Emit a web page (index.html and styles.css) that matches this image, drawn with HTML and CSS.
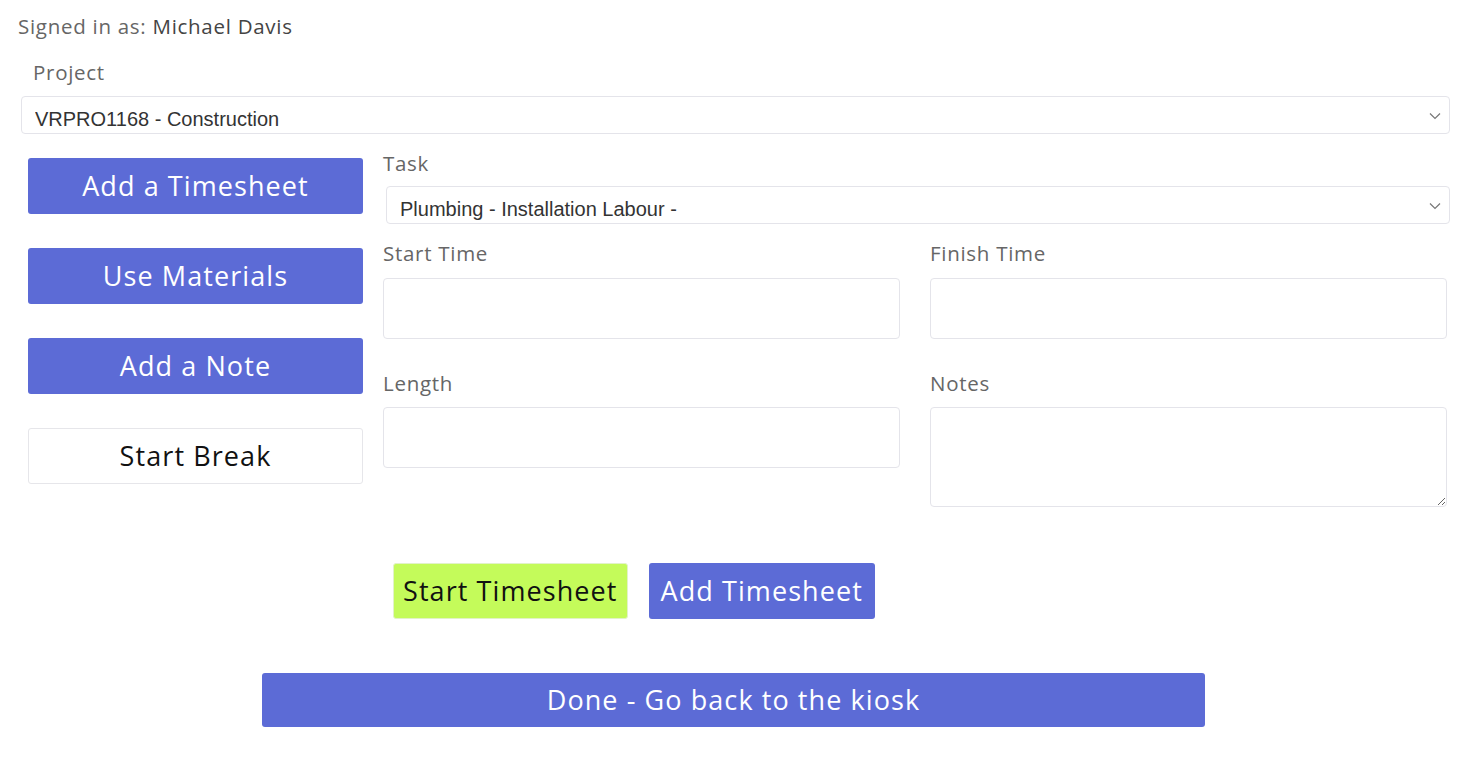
FILE: index.html
```html
<!DOCTYPE html>
<html>
<head>
<meta charset="utf-8">
<link rel="stylesheet" href="styles.css">
</head>
<body>
<div class="page">
  <p class="signed">Signed in as: <span class="name">Michael Davis</span></p>
  <div class="project">
    <label class="lbl project-lbl">Project</label>
    <div class="select-wrap">
      <select class="sel"><option>VRPRO1168 - Construction</option></select>
      <svg class="chev" width="12" height="8" viewBox="0 0 12 8"><path d="M1 1.5 L6 6.5 L11 1.5" fill="none" stroke="#777" stroke-width="1.2"/></svg>
    </div>
  </div>
  <div class="main">
    <div class="side">
      <button class="btn blue side-btn">Add a Timesheet</button>
      <button class="btn blue side-btn">Use Materials</button>
      <button class="btn blue side-btn">Add a Note</button>
      <button class="btn white side-btn">Start Break</button>
    </div>
    <div class="form">
      <label class="lbl">Task</label>
      <div class="select-wrap task-wrap">
        <select class="sel"><option>Plumbing - Installation Labour -</option></select>
        <svg class="chev" width="12" height="8" viewBox="0 0 12 8"><path d="M1 1.5 L6 6.5 L11 1.5" fill="none" stroke="#777" stroke-width="1.2"/></svg>
      </div>
      <div class="grid">
        <div class="field">
          <label class="lbl">Start Time</label>
          <input class="inp" type="text">
        </div>
        <div class="field">
          <label class="lbl">Finish Time</label>
          <input class="inp" type="text">
        </div>
        <div class="field second">
          <label class="lbl">Length</label>
          <input class="inp" type="text">
        </div>
        <div class="field second">
          <label class="lbl">Notes</label>
          <textarea class="inp ta"></textarea>
        </div>
      </div>
      <div class="actions">
        <button class="btn green act">Start Timesheet</button>
        <button class="btn blue act act-add">Add Timesheet</button>
      </div>
    </div>
  </div>
  <div class="done-row">
    <button class="btn blue done">Done - Go back to the kiosk</button>
  </div>
</div>
</body>
</html>
```
FILE: styles.css
```css
* { box-sizing: border-box; }
body {
  margin: 0;
  background: #fff;
  font-family: "Open Sans", "DejaVu Sans", sans-serif;
}
.page {
  padding: 14px 18px 0 18px;
}
.signed {
  margin: 0;
  font-size: 20.5px;
  line-height: 24px;
  color: #666;
  letter-spacing: 0.035em;
}
.signed .name { color: #444; }
.lbl {
  display: block;
  font-size: 20.5px;
  line-height: 26px;
  color: #666;
  letter-spacing: 0.035em;
}
.project {
  margin-top: 21px;
}
.project-lbl {
  padding-left: 15px;
}
.select-wrap {
  position: relative;
  margin-top: 11px;
}
.project .select-wrap { margin-left: 3px; }
.sel {
  display: block;
  width: 100%;
  height: 38px;
  -webkit-appearance: none;
  appearance: none;
  border: 1px solid #e4e4ea;
  border-radius: 4px;
  background: #fff;
  padding: 7px 14px 0 13px;
  font-family: "Liberation Sans", Arial, sans-serif;
  font-size: 20px;
  color: #333;
}
.chev {
  position: absolute;
  right: 9px;
  top: 16px;
}
.main {
  display: flex;
  margin-top: 24px;
}
.side {
  width: 335px;
  margin-left: 10px;
  display: flex;
  flex-direction: column;
  gap: 34px;
}
.btn {
  font-family: "Open Sans", "DejaVu Sans", sans-serif;
  border-radius: 3px;
  border: 0;
  cursor: pointer;
  letter-spacing: 0.04em;
  font-size: 27px;
  padding-bottom: 3px;
}
.blue { background: #5c6bd6; color: #fff; }
.green { background: #c4fb5a; color: #111; border: 1px solid #e2f2c8; }
.white { background: #fff; color: #111; border: 1px solid #e6e6ea; }
.side-btn {
  height: 56px;
  padding-left: 0;
  padding-right: 0;
}
.form {
  flex: 1;
  margin-left: 20px;
  margin-top: -8px;
}
.task-wrap {
  margin-top: 10px;
  margin-left: 3px;
}
.grid {
  display: grid;
  grid-template-columns: 517px 517px;
  column-gap: 30px;
  row-gap: 41px;
  margin-top: 16px;
}
.field .lbl { margin-bottom: 12px; }
.field.second { margin-top: -10px; }
.field.second .lbl { margin-bottom: 11px; }
.inp {
  display: block;
  width: 100%;
  height: 61px;
  border: 1px solid #e4e4ea;
  border-radius: 4px;
  background: #fff;
  font-family: "Liberation Sans", Arial, sans-serif;
  font-size: 20px;
}
.ta {
  height: 100px;
  margin: 0;
}
.actions {
  display: flex;
  gap: 21px;
  margin-top: 56px;
  margin-left: 10px;
}
.act {
  height: 56px;
  padding-left: 9px;
  padding-right: 9px;
}
.act-add {
  padding-left: 12px;
  padding-right: 12px;
}
.done-row {
  display: flex;
  justify-content: center;
  margin-top: 54px;
}
.done {
  width: 943px;
  height: 54px;
  margin-right: 1px;
}
```
